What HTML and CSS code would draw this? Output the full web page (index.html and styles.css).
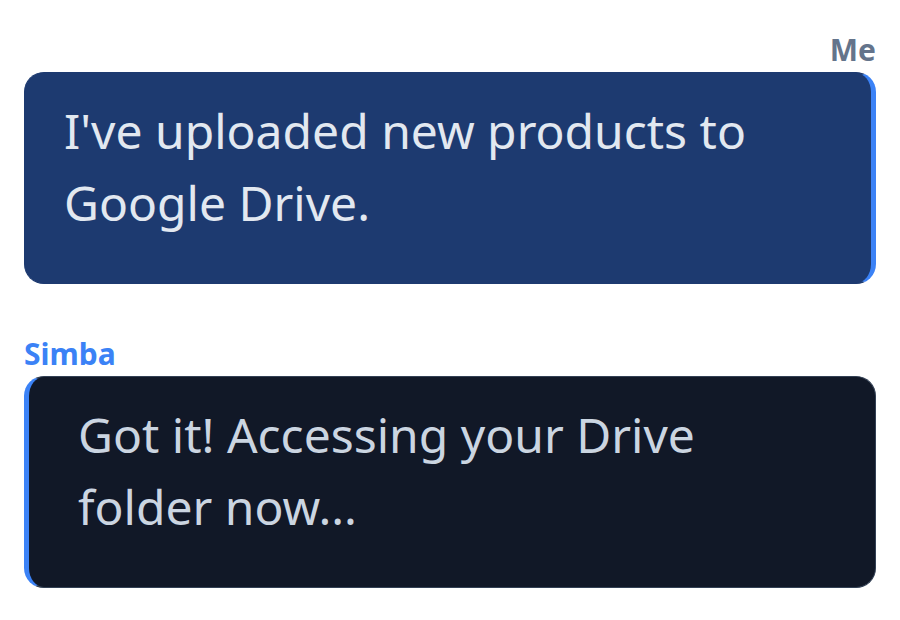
FILE: index.html
```html
<!DOCTYPE html>
<html>
<head>
<meta charset="utf-8">
<link rel="stylesheet" href="styles.css">
</head>
<body>
<div class="chat">
  <div class="msg msg-me">
    <div class="label label-me">Me</div>
    <div class="bubble bubble-me">I've uploaded new products to Google Drive.</div>
  </div>
  <div class="msg msg-bot">
    <div class="label label-bot">Simba</div>
    <div class="bubble bubble-bot">Got it! Accessing your Drive folder now...</div>
  </div>
</div>
</body>
</html>
```
FILE: styles.css
```css
html, body {
  margin: 0;
  padding: 0;
  background: #ffffff;
}
body {
  font-family: "Noto Sans", "DejaVu Sans", sans-serif;
}
.chat {
  display: flex;
  flex-direction: column;
  gap: 52px;
  padding: 32px 24px 24px 24px;
}
.msg {
  display: flex;
  flex-direction: column;
  gap: 4px;
}
.label {
  font-size: 30px;
  font-weight: 700;
  line-height: 36px;
}
.label-me {
  color: #64748b;
  text-align: right;
}
.label-bot {
  color: #3b82f6;
}
.bubble {
  font-size: 48px;
  line-height: 72px;
  border-radius: 20px;
  padding: 22px 48px 44px 39px;
}
.bubble-me {
  background: #1d3a70;
  color: #e2e8f0;
  border: 1px solid #1d3a70;
  border-right: 5px solid #3b82f6;
}
.bubble-bot {
  background: #111827;
  color: #cbd5e1;
  border: 1px solid #334155;
  border-left: 5px solid #3b82f6;
  padding-left: 49px;
}
```
